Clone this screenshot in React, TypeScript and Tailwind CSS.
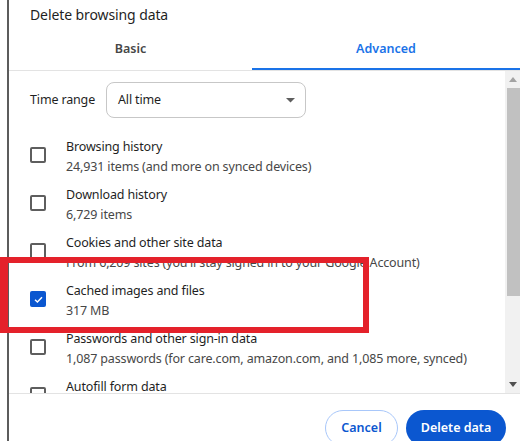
import React from 'react';

const font = { fontFamily: '"Noto Sans", "Open Sans", Arial, sans-serif' };

interface Item {
  title: string;
  sub?: string;
  checked?: boolean;
}

const items: Item[] = [
  { title: 'Browsing history', sub: '24,931 items (and more on synced devices)' },
  { title: 'Download history', sub: '6,729 items' },
  { title: 'Cookies and other site data', sub: "From 6,209 sites (you'll stay signed in to your Google Account)" },
  { title: 'Cached images and files', sub: '317 MB', checked: true },
  { title: 'Passwords and other sign-in data', sub: '1,087 passwords (for care.com, amazon.com, and 1,085 more, synced)' },
  { title: 'Autofill form data' },
];

function Checkbox({ checked }: { checked?: boolean }) {
  if (checked) {
    return (
      <div className="w-[16px] h-[16px] rounded-[2px] bg-[#0b57d0] flex items-center justify-center shrink-0">
        <svg width="11" height="11" viewBox="0 0 12 12">
          <path d="M2.2 6.3 L4.8 8.8 L9.8 3.6" fill="none" stroke="white" strokeWidth="1.6" />
        </svg>
      </div>
    );
  }
  return <div className="w-[16px] h-[16px] rounded-[2px] border-2 border-[#5e5e5e] shrink-0" />;
}

function Row({ item }: { item: Item }) {
  return (
    <div className="h-[48px] flex items-start shrink-0">
      <div className="mt-[16px]">
        <Checkbox checked={item.checked} />
      </div>
      <div className="ml-[20px] pt-[6px] whitespace-nowrap text-[12.5px] tracking-[-0.15px] leading-[20px]">
        <div className="text-[#1f1f1f]">{item.title}</div>
        {item.sub && <div className="text-[#474747]">{item.sub}</div>}
      </div>
    </div>
  );
}

export default function App() {
  return (
    <div className="w-[520px] h-[441px] overflow-hidden bg-white flex relative" style={font}>
      <div className="w-[7px] shrink-0" />
      <div className="w-[2px] bg-[#5c5c5c] shrink-0" />
      <div className="flex-1 flex flex-col min-w-0">
        <div className="h-[31px] pl-[21px] pt-[4px] text-[14px] tracking-[-0.1px] leading-[22px] text-[#1f1f1f] shrink-0">
          Delete browsing data
        </div>

        <div className="h-[40px] flex border-b border-[#e3e3e3] shrink-0">
          <div className="w-[243px] flex flex-col">
            <div className="flex-1 flex items-center justify-center text-[12.5px] font-semibold text-[#474747]">Basic</div>
            <div className="h-[2px]" />
          </div>
          <div className="flex-1 flex flex-col">
            <div className="flex-1 flex items-center justify-center text-[12.5px] font-semibold text-[#1a73e8]">Advanced</div>
            <div className="h-[2px] bg-[#1a73e8]" />
          </div>
        </div>

        <div className="h-[322px] flex shrink-0">
          <div className="flex-1 min-w-0 overflow-hidden pl-[21px] flex flex-col">
            <div className="pt-[11px] flex items-center h-[47px] shrink-0 text-[12.5px] tracking-[-0.15px]">
              <div className="w-[76px] text-[#1f1f1f]">Time range</div>
              <div className="w-[200px] h-[36px] rounded-[8px] border border-[#c7c7c7] flex items-center justify-between pl-[11px] pr-[10px]">
                <span className="text-[#1f1f1f]">All time</span>
                <svg width="9" height="5" viewBox="0 0 9 5">
                  <path d="M0 0 L9 0 L4.5 4.5 Z" fill="#5e5e5e" />
                </svg>
              </div>
            </div>
            <div className="h-[13px] shrink-0" />
            {items.map((it) => (
              <Row key={it.title} item={it} />
            ))}
          </div>
          <div className="w-[15px] bg-[#f1f1f1] flex flex-col shrink-0">
            <div className="h-[17px] flex items-center justify-center">
              <svg width="8" height="5" viewBox="0 0 8 5">
                <path d="M0 5 L8 5 L4 0 Z" fill="#a3a3a3" />
              </svg>
            </div>
            <div className="h-[208px] ml-[2px] bg-[#c1c1c1]" />
            <div className="flex-1" />
            <div className="h-[17px] flex items-center justify-center">
              <svg width="8" height="5" viewBox="0 0 8 5">
                <path d="M0 0 L8 0 L4 5 Z" fill="#505050" />
              </svg>
            </div>
          </div>
        </div>

        <div className="border-t border-[#e3e3e3] flex justify-end gap-[8px] pt-[16px] pr-[14px] shrink-0">
          <button className="w-[73px] h-[36px] rounded-full border border-[#a8c7fa] text-[12.5px] font-semibold text-[#0b57d0] bg-white">
            Cancel
          </button>
          <button className="w-[100px] h-[36px] rounded-full bg-[#0b57d0] text-[12.5px] font-semibold text-white">
            Delete data
          </button>
        </div>
      </div>

      <div className="absolute left-0 top-[257px] w-[369px] h-[76px] border-[6px] border-l-[8px] border-[#e4212a]" />
    </div>
  );
}
